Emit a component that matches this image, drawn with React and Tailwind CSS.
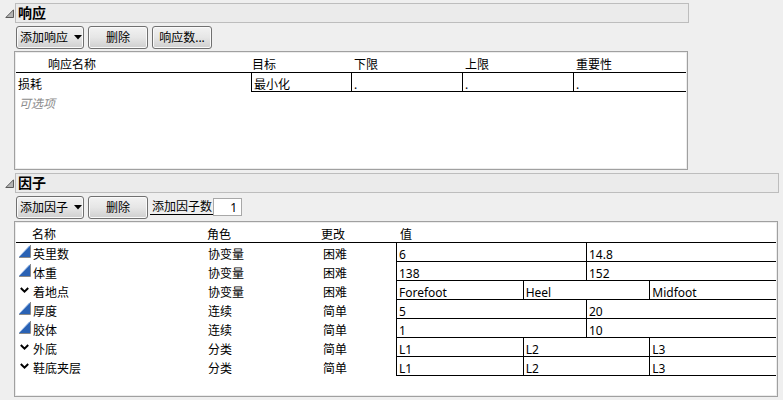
import React from 'react';

const responses = [{ name: '损耗', goal: '最小化', lower: '.', upper: '.', weight: '.' }];

const factors = [
    { name: '英里数', type: 'continuous', role: '协变量', change: '困难', values: ['6', '14.8'] },
    { name: '体重', type: 'continuous', role: '协变量', change: '困难', values: ['138', '152'] },
    { name: '着地点', type: 'list', role: '协变量', change: '困难', values: ['Forefoot', 'Heel', 'Midfoot'] },
    { name: '厚度', type: 'continuous', role: '连续', change: '简单', values: ['5', '20'] },
    { name: '胶体', type: 'continuous', role: '连续', change: '简单', values: ['1', '10'] },
    { name: '外底', type: 'list', role: '分类', change: '简单', values: ['L1', 'L2', 'L3'] },
    { name: '鞋底夹层', type: 'list', role: '分类', change: '简单', values: ['L1', 'L2', 'L3'] },
];

const headCell = 'h-5 p-0 text-left font-normal border-b border-black';
const rowCell = 'h-[19px] p-0';
const gridCell = 'h-[19px] p-0 pl-[2px] border-l border-b border-black';

// Cell text sits slightly below the middle of the row
const CellText = ({ children }) => <span className="block pt-1 leading-[14px]">{children}</span>;

// Same height, for cells that lose a pixel to the bottom rule
const GridText = ({ children }) => <span className="block pt-[6px] leading-3">{children}</span>;

const Outline = ({ title, children }) => (
    <section>
        <div className="flex items-center gap-px">
            <button type="button" aria-label={title} className="shrink-0">
                <svg width="9" height="9" viewBox="0 0 9 9" className="block">
                    <path d="M8.5 0.8V8.5H0.8Z" fill="#b4b4b4" stroke="#5a5a5a" strokeWidth="1" />
                </svg>
            </button>
            <h2 className="grow h-5 pl-[2px] border border-[#bdbdbd] bg-[#ebebeb] text-sm leading-[18px] font-bold">
                {title}
            </h2>
        </div>
        <div className="ml-[9px] mr-px">{children}</div>
    </section>
);

const PushButton = ({ menu, children }) => (
    <button
        type="button"
        className={
            'h-[23px] flex items-center rounded-[3px] border border-[#707070] bg-linear-to-b from-[#f2f2f2] via-[#e6e6e6] to-[#cfcfcf] shadow-[inset_0_0_0_1px_#fafafa] ' +
            (menu ? 'w-[68px] pl-[3px] gap-[6px]' : 'w-[60px] justify-center')
        }
    >
        {children}
        {menu && (
            <svg width="8" height="5" viewBox="0 0 8 5" className="shrink-0">
                <path d="M0 0H8L4 4.5Z" fill="#000" />
            </svg>
        )}
    </button>
);

const Panel = ({ className, children }) => (
    <div className={'border border-[#a0a0a0] bg-white shadow-[inset_0_0_0_1px_#ececec] ' + className}>
        <div className="p-px">{children}</div>
    </div>
);

const TypeIcon = ({ type }) =>
    type === 'continuous' ? (
        <svg width="12" height="14" viewBox="0 0 12 14" className="shrink-0">
            <path d="M11.5 1V13.5H0" fill="none" stroke="#8a8a8a" />
            <path d="M11 1.5V13H0Z" fill="#2a62b4" />
            <path d="M10.5 2L0.5 12.5" stroke="#7fa6dc" />
        </svg>
    ) : (
        <svg width="12" height="14" viewBox="0 0 12 14" className="shrink-0">
            <path d="M1.8 6L5.5 9.7L9.2 6" fill="none" stroke="#000" strokeWidth="2" />
        </svg>
    );

const ResponseTable = () => (
    <table className="w-full table-fixed border-separate border-spacing-0">
        <colgroup>
            <col className="w-[235px]" />
            <col className="w-[100px]" />
            <col className="w-[111px]" />
            <col className="w-[111px]" />
            <col />
        </colgroup>
        <thead>
            <tr>
                <th className={headCell + ' pl-8'}><CellText>响应名称</CellText></th>
                <th className={headCell + ' pl-px'}><CellText>目标</CellText></th>
                <th className={headCell + ' pl-[3px]'}><CellText>下限</CellText></th>
                <th className={headCell + ' pl-[3px]'}><CellText>上限</CellText></th>
                <th className={headCell + ' pl-[3px]'}><CellText>重要性</CellText></th>
            </tr>
        </thead>
        <tbody>
            {responses.map((r) => (
                <tr key={r.name}>
                    <td className={rowCell + ' pl-[2px]'}><CellText>{r.name}</CellText></td>
                    <td className={gridCell}><GridText>{r.goal}</GridText></td>
                    <td className={gridCell}><GridText>{r.lower}</GridText></td>
                    <td className={gridCell}><GridText>{r.upper}</GridText></td>
                    <td className={gridCell}><GridText>{r.weight}</GridText></td>
                </tr>
            ))}
            <tr>
                <td colSpan={5} className={rowCell + ' pl-[3px] italic text-[#8c8c8c]'}>
                    <CellText>可选项</CellText>
                </td>
            </tr>
        </tbody>
    </table>
);

const FactorTable = () => (
    <table className="w-full table-fixed border-separate border-spacing-0">
        {/* six value columns, so a row can hold either two or three values */}
        <colgroup>
            <col className="w-[190px]" />
            <col className="w-[115px]" />
            <col className="w-[75px]" />
            <col span={6} />
        </colgroup>
        <thead>
            <tr>
                <th className={headCell + ' pl-4'}><CellText>名称</CellText></th>
                <th className={headCell + ' pl-px'}><CellText>角色</CellText></th>
                <th className={headCell}><CellText>更改</CellText></th>
                <th colSpan={6} className={headCell + ' pl-1'}><CellText>值</CellText></th>
            </tr>
        </thead>
        <tbody>
            {factors.map((f) => (
                <tr key={f.name}>
                    <td className={rowCell}>
                        <div className="flex pl-[3px] gap-[2px]">
                            <TypeIcon type={f.type} />
                            <CellText>{f.name}</CellText>
                        </div>
                    </td>
                    <td className={rowCell + ' pl-[2px]'}><CellText>{f.role}</CellText></td>
                    <td className={rowCell + ' pl-[2px]'}><CellText>{f.change}</CellText></td>
                    {f.values.map((v) => (
                        <td key={v} colSpan={6 / f.values.length} className={gridCell}>
                            <GridText>{v}</GridText>
                        </td>
                    ))}
                </tr>
            ))}
        </tbody>
    </table>
);

export default function App() {
    return (
        <main className="min-h-screen bg-[#efefef] pt-[3px] pl-[5px] pr-1 pb-1 text-xs text-black font-['Noto_Sans','Noto_Sans_CJK_SC',sans-serif]">
            <div className="mr-[90px]">
                <Outline title="响应">
                    <div className="flex gap-1 pt-[3px] pb-[2px] pl-[2px]">
                        <PushButton menu>添加响应</PushButton>
                        <PushButton>删除</PushButton>
                        <PushButton>响应数...</PushButton>
                    </div>
                    <Panel className="min-h-[119px]">
                        <ResponseTable />
                    </Panel>
                </Outline>
            </div>

            <div className="mt-[3px]">
                <Outline title="因子">
                    <div className="flex gap-[2px] pt-[3px] pb-[2px] pl-[2px]">
                        <div className="flex gap-1">
                            <PushButton menu>添加因子</PushButton>
                            <PushButton>删除</PushButton>
                        </div>
                        <div className="flex items-start pt-[2px]">
                            <label
                                htmlFor="factor-count"
                                className="h-[17px] pt-[2px] pl-[2px] pr-px border-b border-black leading-[14px]"
                            >
                                添加因子数
                            </label>
                            <input
                                id="factor-count"
                                type="text"
                                defaultValue="1"
                                className="w-[29px] h-[18px] pr-1 border border-[#a8a8a8] bg-white text-right"
                            />
                        </div>
                    </div>
                    <Panel className="min-h-[176px]">
                        <FactorTable />
                    </Panel>
                </Outline>
            </div>
        </main>
    );
}
